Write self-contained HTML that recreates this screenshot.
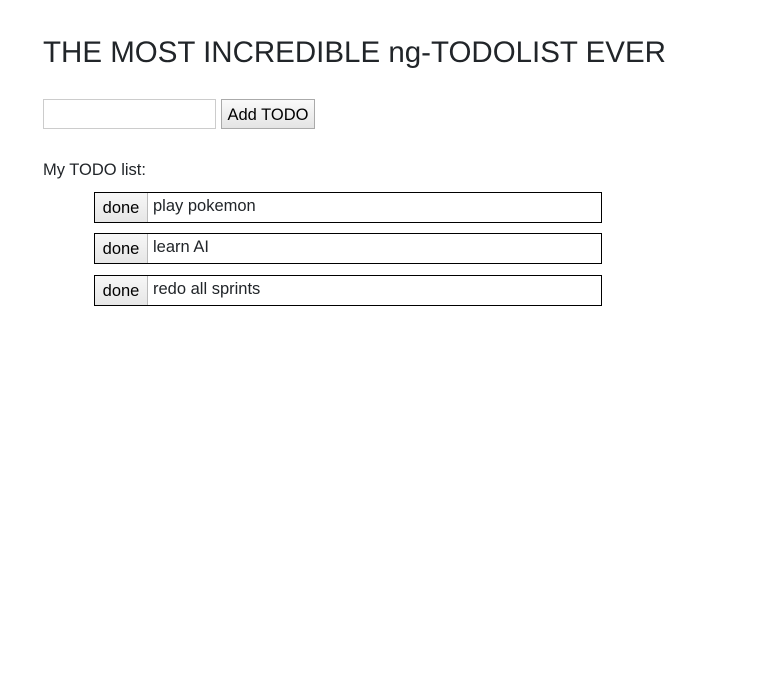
<!DOCTYPE html>
<html><head><style>
body{margin:0;background:#fff;font-family:"Liberation Sans",sans-serif;color:#212529;width:770px;height:680px;position:relative}
h1{position:absolute;left:43px;top:36px;margin:0;font-size:29.5px;font-weight:500;letter-spacing:0;white-space:nowrap}
.in{position:absolute;left:43px;top:99px;width:171px;height:28px;border:1px solid #ccc;box-sizing:content-box}
.add{position:absolute;left:221px;top:99px;width:92px;height:28px;border:1px solid #aaa;background:linear-gradient(#fafafa,#e4e4e4);font-size:16.5px;line-height:30px;text-align:center;color:#000}
.lbl{position:absolute;left:43px;top:161px;font-size:16.5px}
.item{position:absolute;left:94px;width:506px;height:29px;border:1px solid #000;font-size:16.5px}
.item .d{position:absolute;left:0;top:0;width:52px;height:29px;border-right:1px solid #bbb;background:linear-gradient(#f7f7f7,#e6e6e6);text-align:center;line-height:31px;color:#000}
.item .t{position:absolute;left:58px;top:4px}
</style></head><body>
<h1>THE MOST INCREDIBLE ng-TODOLIST EVER</h1>
<div class="in"></div>
<div class="add">Add TODO</div>
<div class="lbl">My TODO list:</div>
<div class="item" style="top:192px"><div class="d">done</div><div class="t">play pokemon</div></div>
<div class="item" style="top:233px"><div class="d">done</div><div class="t">learn AI</div></div>
<div class="item" style="top:275px"><div class="d">done</div><div class="t">redo all sprints</div></div>
</body></html>
